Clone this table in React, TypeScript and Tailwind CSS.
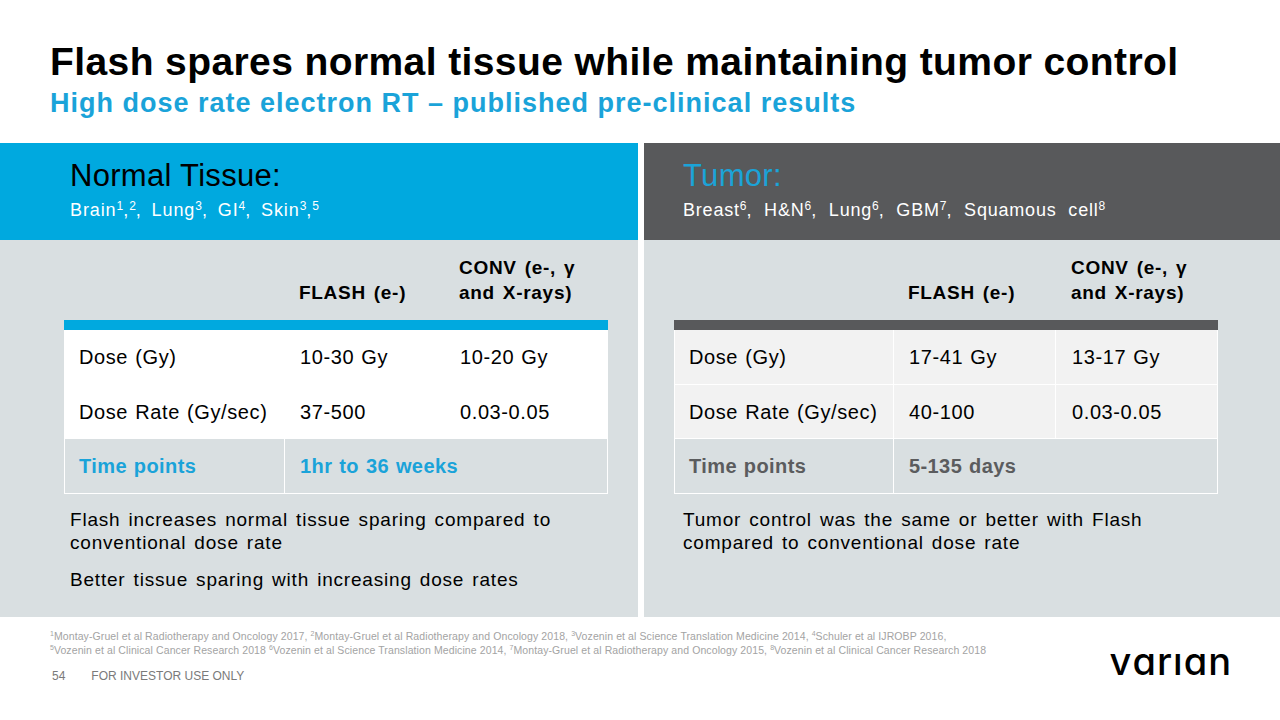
import React from 'react';

const font = { fontFamily: '"Liberation Sans", Arial, sans-serif' };

type Row = { label: string; flash: string; conv: string };

const normalRows: Row[] = [
  { label: 'Dose (Gy)', flash: '10-30 Gy', conv: '10-20 Gy' },
  { label: 'Dose Rate (Gy/sec)', flash: '37-500', conv: '0.03-0.05' },
];

const tumorRows: Row[] = [
  { label: 'Dose (Gy)', flash: '17-41 Gy', conv: '13-17 Gy' },
  { label: 'Dose Rate (Gy/sec)', flash: '40-100', conv: '0.03-0.05' },
];

const Sup: React.FC<{ children: React.ReactNode; small?: boolean }> = ({ children, small }) => (
  <sup className={small ? 'text-[7px] relative -top-[4px] tracking-normal' : 'text-[12px] relative -top-[6px] tracking-normal'}>
    {children}
  </sup>
);

const DataTable: React.FC<{
  rows: Row[];
  cols: string;
  bar: string;
  rowBg: string;
  time: string;
  timeColor: string;
}> = ({ rows, cols, bar, rowBg, time, timeColor }) => (
  <div className="w-[544px] text-[20px] tracking-[0.6px] [word-spacing:1px] text-black">
    <div className={`grid ${cols} h-[80px] items-end pb-[15px] font-bold text-[19px] leading-[25px] tracking-[0.7px] [word-spacing:2px]`}>
      <div />
      <div className="pl-[15px]">FLASH (e-)</div>
      <div className="pl-[16px]">
        CONV (e-, γ<br />and X-rays)
      </div>
    </div>
    <div className={`h-[10px] ${bar}`} />
    {rows.map((r, i) => (
      <div key={i} className={`grid ${cols} h-[54px] items-center ${rowBg} border-l border-r border-white ${i > 0 ? 'border-t' : ''}`}>
        <div className="pl-[14px] h-full flex items-center border-r border-white">{r.label}</div>
        <div className="pl-[15px] h-full flex items-center border-r border-white">{r.flash}</div>
        <div className="pl-[16px]">{r.conv}</div>
      </div>
    ))}
    <div className={`grid ${cols} h-[56px] items-center border border-white font-bold tracking-[0.4px] ${timeColor}`}>
      <div className="pl-[14px] h-full flex items-center border-r border-white">Time points</div>
      <div className="pl-[15px] col-span-2">{time}</div>
    </div>
  </div>
);

export default function App() {
  return (
    <div className="w-[1280px] h-[720px] bg-white overflow-hidden flex flex-col" style={font}>
      <div className="pl-[50px] pt-[40px] h-[143px]">
        <h1 className="text-[39px] font-bold leading-[44px] text-black tracking-[0.4px]">
          Flash spares normal tissue while maintaining tumor control
        </h1>
        <h2 className="text-[27px] font-bold leading-[30px] text-[#1aa3d9] mt-[4px] tracking-[1px]">
          High dose rate electron RT – published pre-clinical results
        </h2>
      </div>

      <div className="flex gap-[6px] h-[474px]">
        <div className="w-[638px] flex flex-col bg-[#d9dfe1]">
          <div className="h-[97px] bg-[#00a9df] pl-[70px] pt-[15px]">
            <div className="text-[31px] leading-[36px] tracking-[0.3px] text-black">Normal Tissue:</div>
            <div className="text-[18px] leading-[20px] text-white mt-[6px] tracking-[0.9px] [word-spacing:4px]">
              Brain<Sup>1</Sup>,<Sup>2</Sup>, Lung<Sup>3</Sup>, GI<Sup>4</Sup>, Skin<Sup>3</Sup>,<Sup>5</Sup>
            </div>
          </div>
          <div className="pl-[64px]">
            <DataTable
              rows={normalRows}
              cols="grid-cols-[220px_159px_165px]"
              bar="bg-[#00a9df]"
              rowBg="bg-white"
              time="1hr to 36 weeks"
              timeColor="text-[#1aa3d9]"
            />
          </div>
          <div className="pl-[70px] pt-[14px] text-[19px] leading-[23px] tracking-[0.8px] [word-spacing:2px] text-black w-[560px]">
            <p>Flash increases normal tissue sparing compared to conventional dose rate</p>
            <p className="mt-[14px]">Better tissue sparing with increasing dose rates</p>
          </div>
        </div>

        <div className="flex-1 flex flex-col bg-[#d9dfe1]">
          <div className="h-[97px] bg-[#58595b] pl-[39px] pt-[15px]">
            <div className="text-[31px] leading-[36px] tracking-[0.3px] text-[#1ba3d8]">Tumor:</div>
            <div className="text-[18px] leading-[20px] text-white mt-[6px] tracking-[0.8px] [word-spacing:6px]">
              Breast<Sup>6</Sup>, H&amp;N<Sup>6</Sup>, Lung<Sup>6</Sup>, GBM<Sup>7</Sup>, Squamous cell<Sup>8</Sup>
            </div>
          </div>
          <div className="pl-[30px]">
            <DataTable
              rows={tumorRows}
              cols="grid-cols-[219px_162px_163px]"
              bar="bg-[#58595b]"
              rowBg="bg-[#f2f2f2]"
              time="5-135 days"
              timeColor="text-[#5b5c5e]"
            />
          </div>
          <div className="pl-[39px] pt-[14px] text-[19px] leading-[23px] tracking-[0.8px] [word-spacing:2px] text-black w-[500px]">
            <p>Tumor control was the same or better with Flash compared to conventional dose rate</p>
          </div>
        </div>
      </div>

      <div className="flex pl-[50px] pr-[48px]">
        <div className="flex flex-col">
          <div className="pt-[12px] text-[10.5px] leading-[14px] text-[#a3a3a3] tracking-[0.1px]">
            <p>
              <Sup small>1</Sup>Montay-Gruel et al Radiotherapy and Oncology 2017, <Sup small>2</Sup>Montay-Gruel et al Radiotherapy and Oncology 2018, <Sup small>3</Sup>Vozenin et al Science Translation Medicine 2014, <Sup small>4</Sup>Schuler et al IJROBP 2016,
            </p>
            <p>
              <Sup small>5</Sup>Vozenin et al Clinical Cancer Research 2018 <Sup small>6</Sup>Vozenin et al Science Translation Medicine 2014, <Sup small>7</Sup>Montay-Gruel et al Radiotherapy and Oncology 2015, <Sup small>8</Sup>Vozenin et al Clinical Cancer Research 2018
            </p>
          </div>
          <div className="flex items-center gap-[26px] text-[12px] leading-[16px] text-[#7a7a7a] mt-[11px] pl-[2px]">
            <span>54</span>
            <span>FOR INVESTOR USE ONLY</span>
          </div>
        </div>
        <div
          className="ml-auto pt-[25px] text-[38px] leading-[38px] font-medium text-black tracking-[1px]"
          style={{ fontFamily: 'Inter, "DejaVu Sans", sans-serif' }}
        >
          vɑrıɑn
        </div>
      </div>
    </div>
  );
}
